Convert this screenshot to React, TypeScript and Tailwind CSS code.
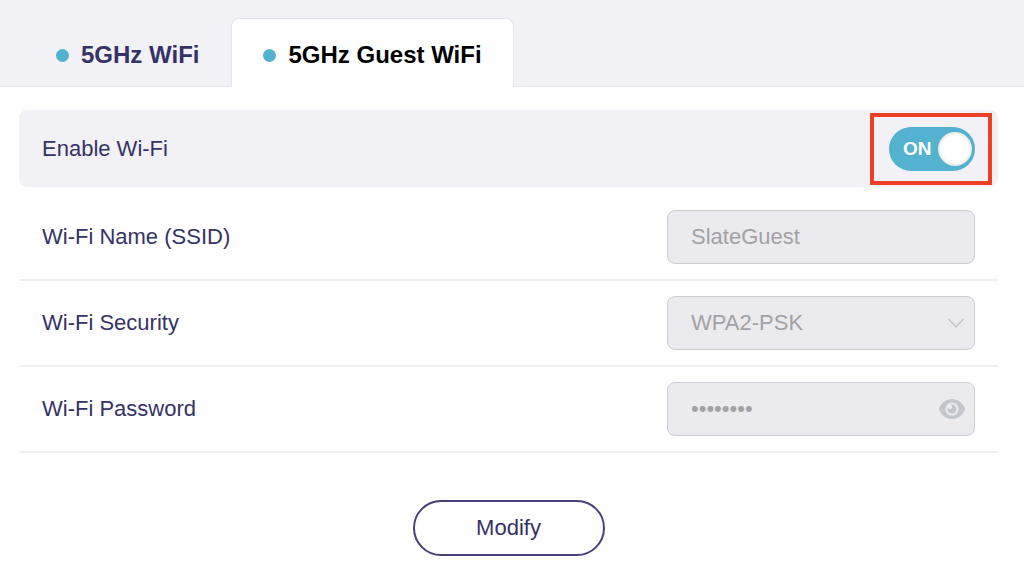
import { useState, ReactNode } from 'react';
import clsx from 'clsx';

const TABS = [
  { id: 'main', label: '5GHz WiFi' },
  { id: 'guest', label: '5GHz Guest WiFi' },
];

const FIELD = 'block w-full h-[54px] rounded-lg border border-[#cdccd1] bg-[#ebeaef] pl-[23px] pr-12 text-[22px] text-[#a2a1a5] opacity-100 appearance-none';

function EyeIcon() {
  return (
    <svg className="w-[26px] h-5" viewBox="0 0 26 20" fill="none">
      <path d="M13 0C7.200 0 2.500 3.700.300 8.800a3 3 0 0 0 0 2.400C2.500 16.300 7.200 20 13 20s10.500-3.700 12.700-8.800a3 3 0 0 0 0-2.400C23.500 3.700 18.800 0 13 0Z" fill="#c2c5cb" />
      <circle cx="13" cy="10" r="6.600" fill="#ebeaef" />
      <circle cx="13" cy="10" r="4.500" fill="#c2c5cb" />
      <circle cx="11" cy="8" r="2.200" fill="#ebeaef" />
    </svg>
  );
}

function Row({ id, label, children }: { id: string; label: string; children: ReactNode }) {
  return (
    <div className="flex h-[86px] items-center justify-between border-b-2 border-[#efeff2] px-[23px]">
      <label htmlFor={id}>{label}</label>
      <div className="relative w-[308px]">{children}</div>
    </div>
  );
}

function Toggle({ id, checked, onChange }: { id: string; checked: boolean; onChange: (v: boolean) => void }) {
  return (
    <span className="relative block h-11 w-[86px]">
      <input
        id={id}
        type="checkbox"
        role="switch"
        checked={checked}
        onChange={(e) => onChange(e.target.checked)}
        className="block h-full w-full cursor-pointer appearance-none rounded-full bg-[#c2c5cb] checked:bg-[#52b2cf]"
      />
      <span className={clsx('pointer-events-none absolute inset-y-0 flex items-center text-[19px] font-bold text-white', checked ? 'left-3.5' : 'right-2.5')}>
        {checked ? 'ON' : 'OFF'}
      </span>
      <span className={clsx('pointer-events-none absolute top-[5px] size-[34px] rounded-full bg-white shadow-[inset_0_0_4px_rgba(0,0,0,0.2)]', checked ? 'right-[3px]' : 'left-[3px]')} />
      {/* highlight frame around the switch */}
      <span className="pointer-events-none absolute -top-3.5 -bottom-3.5 -left-[19px] -right-[17px] border-4 border-[#ec4127]" />
    </span>
  );
}

export default function App() {
  const [tab, setTab] = useState('guest');
  const [enabled, setEnabled] = useState(true);

  return (
    <div className="min-h-screen bg-white font-['Liberation_Sans',Arial,sans-serif] text-[22px] leading-7 text-[#353267]">
      <div role="tablist" className="flex h-[87px] items-end border-b border-[#e6e5ea] bg-[#f2f1f6] pl-6">
        {TABS.map((t) => (
          <button
            key={t.id}
            role="tab"
            aria-selected={tab === t.id}
            onClick={() => setTab(t.id)}
            className={clsx(
              '-mb-px flex h-[69px] items-center gap-3 rounded-t-lg border border-b-0 px-[31px] pt-1 text-2xl font-bold',
              tab === t.id ? 'border-[#e6e5ea] bg-white text-black' : 'border-transparent',
            )}
          >
            <span className="size-[13px] rounded-full bg-[#52b2cf]" />
            {t.label}
          </button>
        ))}
      </div>

      <form className="mt-[23px] ml-[19px] mr-[26px]" onSubmit={(e) => e.preventDefault()}>
        <div className="mb-2 flex h-[77px] items-center justify-between rounded-lg bg-[#f2f1f6] px-[23px]">
          <label htmlFor="enable">Enable Wi-Fi</label>
          <Toggle id="enable" checked={enabled} onChange={setEnabled} />
        </div>

        <Row id="ssid" label="Wi-Fi Name (SSID)">
          <input id="ssid" type="text" defaultValue="SlateGuest" disabled className={FIELD} />
        </Row>
        <Row id="security" label="Wi-Fi Security">
          <select id="security" defaultValue="WPA2-PSK" disabled className={FIELD}>
            <option>WPA2-PSK</option>
          </select>
          <svg className="pointer-events-none absolute right-[11px] top-[22px] h-2.5 w-4" viewBox="0 0 16 10" fill="none" stroke="#c2c5cb" strokeWidth="1.500">
            <path d="M.500.800 8 9 15.500.800" />
          </svg>
        </Row>
        <Row id="password" label="Wi-Fi Password">
          <input id="password" type="password" defaultValue="goodlife" disabled className={FIELD} />
          <button type="button" aria-label="Show password" className="absolute inset-y-0 right-2.5 flex items-center">
            <EyeIcon />
          </button>
        </Row>

        <div className="mt-[47px] mb-5 flex justify-center">
          <button type="submit" className="h-14 w-48 rounded-full border-2 border-[#45427a]">Modify</button>
        </div>
      </form>
    </div>
  );
}
